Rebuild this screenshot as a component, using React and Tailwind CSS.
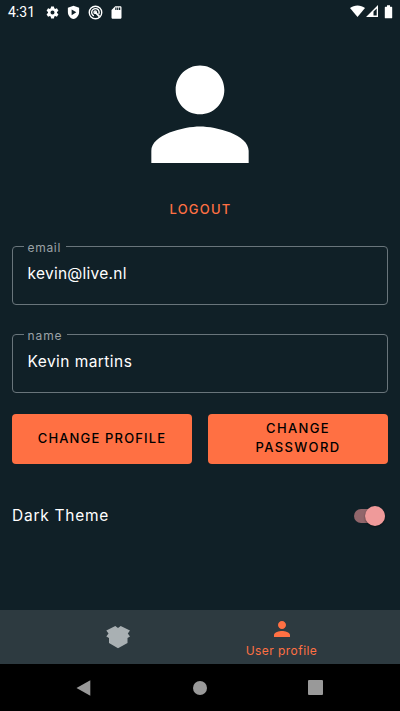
import React from "react";

const PERSON =
  "M12 12c2.21 0 4-1.79 4-4s-1.79-4-4-4-4 1.79-4 4 1.79 4 4 4zm0 2c-2.67 0-8 1.34-8 4v2h16v-2c0-2.66-5.33-4-8-4z";

function StatusBar() {
  return (
    <header className="flex h-6 items-center justify-between pl-2 pr-[7px] text-white">
      <div className="flex items-center">
        <span className="w-[36.500px] font-[Roboto] text-[14px] leading-6">4:31</span>
        <svg className="h-[15px] w-[15px]" viewBox="0 0 24 24" fill="currentColor">
          <path d="M19.14 12.94c.04-.3.06-.61.06-.94s-.02-.64-.07-.94l2.03-1.58c.18-.14.23-.41.12-.61l-1.92-3.32c-.12-.22-.37-.29-.59-.22l-2.39.96c-.5-.38-1.03-.7-1.62-.94l-.36-2.54c-.04-.24-.24-.41-.48-.41h-3.84c-.24 0-.43.17-.47.41l-.36 2.54c-.59.24-1.13.57-1.62.94l-2.39-.96c-.22-.08-.47 0-.59.22L2.74 8.87c-.12.21-.08.47.12.61l2.03 1.58c-.05.3-.09.63-.09.94s.02.64.07.94l-2.03 1.58c-.18.14-.23.41-.12.61l1.92 3.32c.12.22.37.29.59.22l2.39-.96c.5.38 1.03.7 1.62.94l.36 2.54c.05.24.24.41.48.41h3.84c.24 0 .44-.17.47-.41l.36-2.54c.59-.24 1.13-.56 1.62-.94l2.39.96c.22.08.47 0 .59-.22l1.92-3.32c.12-.22.07-.47-.12-.61l-2.01-1.58zM12 15.2a3.2 3.2 0 1 1 0-6.4 3.2 3.2 0 0 1 0 6.4z" />
        </svg>
        <svg className="ml-[6.500px] h-[15px] w-[15px]" viewBox="0 0 24 24" fill="currentColor">
          <path fillRule="evenodd" d="M12 1 3 4.500v6.500c0 5.55 3.84 10.200 9 11.500 5.16-1.300 9-5.950 9-11.500V4.500l-9-3.500zM9 7.2v9l7.5-4.5z" />
        </svg>
        <svg className="ml-[6.500px] h-[15px] w-[15px]" viewBox="0 0 24 24" fill="none" stroke="currentColor">
          <circle cx="12" cy="12" r="10" strokeWidth="2.2" />
          <path d="M17.200 14.500A6 6 0 1 0 9.500 17.300" strokeWidth="2.200" />
          <path d="M11 11l7.500 7.500" strokeWidth="3" />
          <circle cx="11.500" cy="11.500" r="2" strokeWidth="2" />
        </svg>
        <svg className="ml-[6.500px] h-[15px] w-[15px]" viewBox="0 0 24 24" fill="currentColor">
          <path fillRule="evenodd" d="M18 2h-8L4.02 8 4 20c0 1.1.9 2 2 2h12c1.100 0 2-.9 2-2V4c0-1.100-.9-2-2-2zm-6 6h-2V4h2v4zm3 0h-2V4h2v4zm3 0h-2V4h2v4z" />
        </svg>
      </div>
      <div className="flex items-center pb-px">
        <svg className="h-[13px] w-[15px]" viewBox="0 0 15 13" fill="currentColor">
          <path d="M0 3C4.200-.5 10.800-.5 15 3L7.500 12z" />
        </svg>
        <svg className="ml-px h-[13px] w-[13px]" viewBox="0 0 13 13" fill="currentColor">
          <path fillRule="evenodd" d="M0 12 12 0v12zM7.500 6.600v4h3.200V3.400z" />
        </svg>
        <svg className="ml-[5px] h-[14px] w-[9px]" viewBox="0 0 9 14" fill="currentColor">
          <path d="M3 .3h3v1.400h1.500q.7 0 .7.700v10.300q0 .5-.7.500h-6q-.7 0-.7-.5V2.400q0-.7.700-.7H3z" />
        </svg>
      </div>
    </header>
  );
}

function Field({ label, value, labelClass, valueClass, className }) {
  return (
    <div className={"relative rounded-[4px] border border-[#69757b] pl-[14.500px] " + className}>
      <span className={"absolute -top-[8px] left-[11px] h-4 bg-[#102027] pl-[3.500px] text-[12px] leading-[18px] text-[#9ba2a6] " + labelClass}>
        {label}
      </span>
      <span className={"block pt-[15px] text-[15.500px] leading-6 text-white " + valueClass}>{value}</span>
    </div>
  );
}

export default function App() {
  return (
    <div className="flex h-[711px] w-[400px] flex-col overflow-hidden bg-[#102027] font-[Inter,sans-serif]">
      <StatusBar />
      <main className="flex flex-1 flex-col px-3">
        <svg className="mt-[17px] h-[146.500px] w-[146px] shrink-0 self-center text-white" viewBox="0 0 24 24" fill="currentColor">
          <path d={PERSON} />
        </svg>
        <button className="mt-[11px] h-5 self-center pl-px text-[13px] font-medium leading-5 tracking-[1.200px] text-[#ff7043]">
          LOGOUT
        </button>
        <Field label="email" value="kevin@live.nl" className="mt-[27px] h-[59px]" labelClass="w-[42px] tracking-[0.700px]" valueClass="tracking-[0.260px]" />
        <Field label="name" value="Kevin martins" className="mt-[29px] h-[59px]" labelClass="w-[43px] tracking-[0.900px]" valueClass="tracking-[0.440px]" />
        <div className="mt-[21px] grid grid-cols-2 gap-4 text-[13px] font-medium leading-[19px] text-black">
          <button className="h-[50px] rounded-[4px] bg-[#ff7043] tracking-[1.150px]">CHANGE PROFILE</button>
          <button className="h-[50px] rounded-[4px] bg-[#ff7043] pb-[2px] tracking-[1.350px]">
            CHANGE
            <br />
            PASSWORD
          </button>
        </div>
        <div className="mt-[39px] flex h-6 items-center justify-between pr-[3px]">
          <span className="pt-[2px] text-[15.500px] tracking-[0.750px] text-white">Dark Theme</span>
          <span className="mt-[3px] flex h-[14px] w-[31px] items-center justify-end rounded-full bg-[#91666b]">
            <span className="h-[20px] w-[20px] shrink-0 rounded-full bg-[#ef9a9a] shadow-[0_1px_2px_rgba(0,0,0,0.45)]" />
          </span>
        </div>
      </main>
      <nav className="flex h-[54px] shrink-0 bg-[#2d3a40] pl-[37px] pr-[37px]">
        <div className="flex flex-1 justify-center">
          <svg className="mt-[15px] mr-px h-6 w-6" viewBox="0 0 24 24" fill="#a9b0b3">
            <path d="M9.300 1 12 3 14.700 1 24 5.600 21.800 8.600 24 11.500 21.500 13V18L12 23.300 3 18V13L.3 11.500 2.500 8.600 .3 5.600z" />
          </svg>
        </div>
        <div className="flex flex-1 flex-col items-center text-[#ff7043]">
          <svg className="mt-[7px] h-6 w-6 shrink-0" viewBox="0 0 24 24" fill="currentColor">
            <path d={PERSON} />
          </svg>
          <span className="mt-px text-[12px] leading-[18px] tracking-[0.450px]">User profile</span>
        </div>
      </nav>
      <footer className="flex h-[47px] shrink-0 items-center justify-between bg-black pl-[76px] pr-[77px]">
        <svg className="h-4 w-[15px]" viewBox="0 0 15 16" fill="#999">
          <path d="M14.300.3v15.400L.5 8z" />
        </svg>
        <span className="h-[14px] w-[14px] rounded-full bg-[#999]" />
        <span className="h-[15px] w-[15px] rounded-[1px] bg-[#999]" />
      </footer>
    </div>
  );
}
